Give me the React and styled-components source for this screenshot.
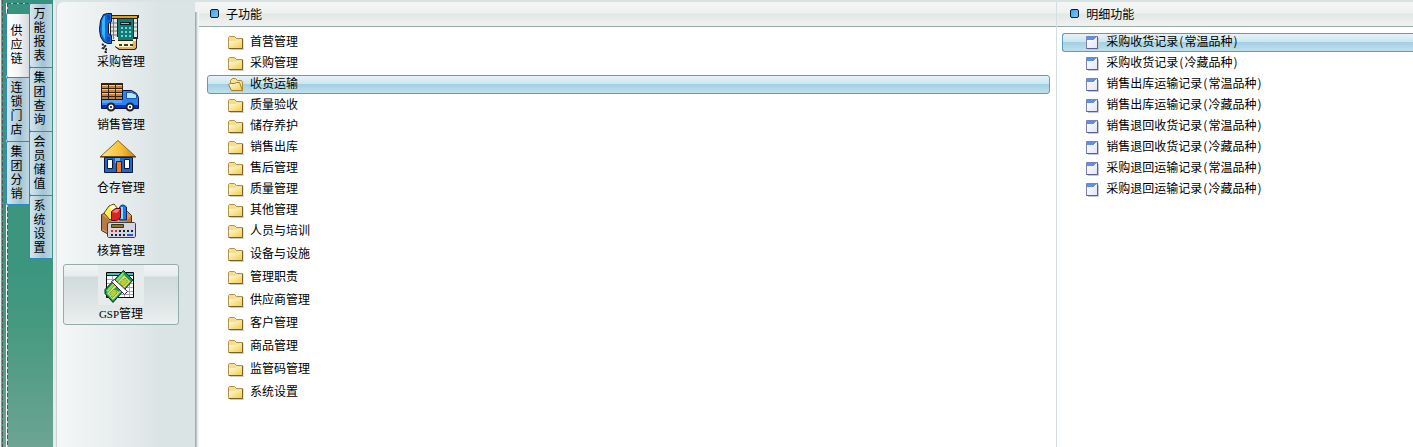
import React, { useState } from "react";
import styled, { createGlobalStyle, css } from "styled-components";

const GlobalStyle = createGlobalStyle`
  * { box-sizing: border-box; }
  body {
    margin: 0;
    background: #fff;
    color: #000;
    font: 12px/16px "Noto Sans CJK SC", sans-serif;
  }
  button { font: inherit; color: inherit; cursor: default; }
`;

const Shell = styled.div`
  display: flex;
  min-height: 100vh;
`;

const Rail = styled.aside`
  display: flex;
  flex: none;
  width: 53px;
  border-left: 1px solid #e9eeee;
  background: linear-gradient(#3a9180, #3c967f 60%, #45997f 72%, #6da493);
`;

const Edge = styled.div`
  width: 5px;
  border-left: 1px solid #8d9694;
  background: repeating-linear-gradient(#55535a 0 4px, #3f9a83 4px 6px) 0 0 / 1px 100% no-repeat;
`;

const Frame = styled.div`
  display: flex;
  flex: 1;
  margin-top: 3px;
  border-left: 1px solid #fff;
  background:
    repeating-linear-gradient(#55535a 0 4px, #b9c9c4 4px 6px) 0 0 / 1px 100% no-repeat,
    repeating-linear-gradient(90deg, #55535a 0 4px, #b9c9c4 4px 6px) 0 0 / 23px 1px no-repeat;
`;

const TabColumn = styled.nav`
  display: flex;
  flex-direction: column;
  width: 23px;
  padding-top: ${(p) => (p.$inner ? 0 : 10)}px;
  &:first-child { margin-left: -1px; }
`;

const Tab = styled.button`
  display: flex;
  align-items: center;
  justify-content: center;
  height: 64px;
  padding: 0 3px 3px 0;
  border: 0;
  border-top: 1px solid #2a8ac2;
  border-left: 1px solid #2a8ac2;
  border-radius: 2px 0 0 2px;
  line-height: 14px;
  background: ${(p) =>
    p.$active
      ? "linear-gradient(90deg, #fff, #f4f5f6 50%, #d5dadd)"
      : "linear-gradient(90deg, #d6e7ee, #bcd6e2 30%, #a5c4d4 60%, #c0d8e3)"};
  &:last-child { border-bottom: 1px solid #2a8ac2; }
`;

const TabText = styled.span`
  width: 12px;
  word-break: break-all;
`;

const Workspace = styled.div`
  display: flex;
  flex: 1;
  min-width: 0;
  border-top: 2px solid #d9e4e2;
  border-left: 3px solid #e6ebeb;
  background: #d9e4e2;
`;

const Nav = styled.nav`
  display: flex;
  flex-direction: column;
  flex: none;
  gap: 2px;
  width: 139px;
  padding: 10px 16px 0 6px;
  border-left: 1px solid #ccd2d6;
  border-top-left-radius: 6px;
  background: linear-gradient(90deg, #f5f7f7, #edf1f2 25%, #e3eaeb 55%, #dbe4e5 75%);
`;

const NavButton = styled.button`
  display: flex;
  flex-direction: column;
  align-items: center;
  height: 61px;
  padding: 0;
  border: 1px solid transparent;
  border-radius: 3px;
  background: none;
  ${(p) =>
    p.$active &&
    css`
      border-color: #94adab;
      background: linear-gradient(#f2f5f5, #e6ecec 11px, #d1dbdb 12px, #dfe6e6 40px, #ebf0f0);
    `}
`;

const NavIcon = styled.svg`
  display: block;
  flex: none;
  width: 46px;
  height: 40px;
`;

const Latin = styled.span`
  font-family: "Liberation Serif", serif;
  font-size: 11px;
`;

const Divider = styled.div`
  flex: none;
  width: 4px;
  margin-top: 10px;
  background: linear-gradient(90deg, #a3afb1 0 1px, #bcc8ca 1px 2px, #e3e8e8 2px 3px, #f5f7f7 3px);
`;

const Gutter = styled.div`
  display: flex;
  flex: none;
  background: linear-gradient(#f1f4f3 0 10px, #fff 10px);
`;

const Panel = styled.section`
  flex: ${(p) => p.$grow};
  min-width: 0;
  background: #fff;
  & + & { border-left: 1px solid #d5dfe1; }
`;

const PanelHeader = styled.header`
  display: flex;
  align-items: center;
  gap: 7px;
  height: 25px;
  padding: 0 10px 1px ${(p) => (p.$detail ? 13 : 11)}px;
  border-bottom: 1px solid #98a8a5;
  background: linear-gradient(#f4f7f6, #edf1f0 45%, #e2e7e6 50%, #eff2f1);
`;

const Marker = styled.span`
  width: 9px;
  height: 9px;
  border: 1px solid #0b1c2c;
  border-radius: 2px;
  background: linear-gradient(135deg, #4aa0e8, #6fc8ff);
`;

const Title = styled.h2`
  margin: 0;
  font-size: 12px;
  font-weight: 400;
`;

const List = styled.div`
  display: flex;
  flex-direction: column;
  gap: ${(p) => (p.$loose ? 4 : 2)}px;
  padding: ${(p) => (p.$loose ? "4px 6px 0 8px" : "6px 6px 0 8px")};
  ${(p) => p.$detail && css`padding: 6px 0 0 5px;`}
`;

const Row = styled.button`
  display: flex;
  align-items: center;
  gap: ${(p) => (p.$detail ? 4 : 6)}px;
  width: 100%;
  height: 19px;
  padding: 0 0 0 ${(p) => (p.$detail ? 23 : 20)}px;
  border: 1px solid transparent;
  border-radius: 3px;
  background: none;
  text-align: left;
  white-space: nowrap;
  ${(p) =>
    p.$detail &&
    css`
      border-right: 0;
      border-radius: 3px 0 0 3px;
    `}
  ${(p) =>
    p.$active &&
    css`
      border-color: #5a9dbd;
      background: linear-gradient(#e6f3f8, #cde6f0 45%, #a3d0e3 50%, #bfe0ed);
    `}
`;

const RowLabel = styled.span`
  padding-bottom: 4px;
`;

const RowIcon = styled.svg`
  display: block;
  flex: none;
  width: 16px;
  height: 15px;
`;

const Paren = styled.span`
  padding: 0 1px;
`;

const PhoneIcon = () => (
  <NavIcon viewBox="0 0 46 40" aria-hidden="true">
    <path d="M12 2h29v3h-1v21h-1v9l-2 2H21l-4-3v-6h-5z" fill="#222" />
    <path d="M13 3h26v2H13z" fill="#d9a21c" />
    <path d="M13 6h6v21h-6zM36 6h3v18h-3z" fill="#e4e4e4" />
    <path d="M13 10h6M13 14h6M13 18h6M13 22h6M36 10h3M36 14h3M36 18h3M15.500 6v20" stroke="#777" />
    <path d="M20 6h15v21H20z" fill="#117c77" />
    <path d="M22 9h11v3H22z" fill="#0a2226" />
    <path d="M23 10h8v1h-8z" fill="#9bb8ae" />
    <path d="M23 14h2v2h-2zM27 14h2v2h-2zM31 14h2v2h-2zM23 18h2v2h-2zM27 18h2v2h-2zM31 18h2v2h-2zM23 22h2v2h-2zM27 22h2v2h-2zM31 22h2v2h-2z" fill="#76d3cb" />
    <path d="M17 24h3v4h15v-2h3v8l-2 2H22l-5-3z" fill="#fff5cc" />
    <path d="M35 28h3v6l-2 2h-2zM20 34h14v2H22z" fill="#e9b35a" />
    <path d="M21 31h3v2h-3zM26 31h4v2h-4zM32 31h3v2h-3z" fill="#4a3a18" />
    <path d="M5.500 1.500l4-1h4v8l-3 2v10l3 2v8h-4l-4-2-3-5-1-7 1-9z" fill="#1268d8" stroke="#06132e" />
    <path d="M6 3L4 8v13l3 6V3z" fill="#35b5ff" />
    <path d="M9 2h3v5H9zM9 24h3v5H9z" fill="#1847a8" />
    <path d="M4 31l3 2-2 2 3 1 0 3-2 0" fill="none" stroke="#222" strokeWidth="2" strokeDasharray="2 1" />
  </NavIcon>
);

const TruckIcon = () => (
  <NavIcon viewBox="0 0 46 40" aria-hidden="true">
    <path d="M3 7h22v17H3z" fill="#35210d" />
    <path d="M4 9h6v3H4zM11 9h6v3h-6zM18 9h6v3h-6zM4 13h6v3H4zM11 13h6v3h-6zM18 13h6v3h-6zM4 17h6v3H4zM11 17h6v3h-6zM18 17h6v3h-6zM4 21h6v2H4zM11 21h6v2h-6zM18 21h6v2h-6z" fill="#c58336" />
    <path d="M4 9h6v1H4zM11 9h6v1h-6zM18 9h6v1h-6zM4 13h6v1H4zM11 13h6v1h-6zM18 13h6v1h-6zM4 17h6v1H4zM11 17h6v1h-6zM18 17h6v1h-6z" fill="#f0c883" />
    <path d="M3.500 23.500h21v-9h9l5 3 2 4v11h-37z" fill="#2a83ee" stroke="#07144a" />
    <path d="M4 24h20v3H4z" fill="#53a5ff" />
    <path d="M4 29h36v3H4z" fill="#0b2bd0" />
    <path d="M28.500 16.500h5l5 2v4h-10z" fill="#b8e8ff" stroke="#1c5bac" />
    <circle cx="13" cy="31" r="3.500" fill="#fff" stroke="#222" strokeWidth="2" />
    <circle cx="32" cy="31" r="3.500" fill="#fff" stroke="#222" strokeWidth="2" />
    <circle cx="13" cy="31" r="1" />
    <circle cx="32" cy="31" r="1" />
  </NavIcon>
);

const HouseIcon = () => (
  <NavIcon viewBox="0 0 46 40" aria-hidden="true">
    <defs>
      <linearGradient id="roof">
        <stop offset="0" stopColor="#ffe88a" />
        <stop offset=".6" stopColor="#f6bd35" />
        <stop offset="1" stopColor="#c98210" />
      </linearGradient>
    </defs>
    <path d="M6.500 18.500h28v15h-28z" fill="#1d66cf" stroke="#08143c" />
    <path d="M17 19h5v5h-5z" fill="#5db2ff" />
    <path d="M20 1.500L2.500 17.500h35z" fill="url(#roof)" stroke="#8a661c" />
    <path d="M2 18h36" stroke="#3a2a10" />
    <path d="M9.500 20.500h5v9h-5zM26.500 20.500h5v9h-5z" fill="#fff" stroke="#0a1433" />
    <path d="M18.500 22.500h5v11h-5z" fill="#e88022" stroke="#3b1c06" />
  </NavIcon>
);

const BoxIcon = () => (
  <NavIcon viewBox="0 0 46 40" aria-hidden="true">
    <path d="M3.500 12.500l8-3h18l4 4v17l-21 3-9-5z" fill="#dd9a5a" stroke="#4a3018" />
    <path d="M4 13l9 6v12l-9-4z" fill="#b87a44" />
    <path d="M6 11l5-7 5-2 4 5-5 9-3 2z" fill="#ffec58" stroke="#55480a" />
    <path d="M12 4l4-1 3 4-5 2z" fill="#fffbd0" />
    <path d="M21.500 5q3-4 7 0v13h-7z" fill="#1b7be6" stroke="#072260" />
    <path d="M23 5h2v12h-2z" fill="#8fd8ff" />
    <path d="M13.500 9.500l4-3h5v9l-4 3h-5z" fill="#d8232b" stroke="#5b0508" />
    <path d="M14 10l4-3h4l-3 4z" fill="#ff7a74" />
    <path d="M28 19l5-5v6h-5z" fill="#d0701c" />
    <path d="M11.500 20.500h25l1 1v13l-1 1h-26l-1-1v-13z" fill="#d3d5e2" stroke="#3c3d48" />
    <path d="M13.500 22.500h12v3h-12z" fill="#8a7a2b" stroke="#3a350c" />
    <path d="M13 28h2v2h-2zM17 28h2v2h-2z" fill="#e22" />
    <path d="M13 32h2v2h-2zM17 32h2v2h-2zM21 28h2v2h-2zM21 32h2v2h-2zM25 28h2v2h-2zM25 32h2v2h-2zM29 28h2v2h-2zM33 28h2v2h-2z" fill="#222" />
    <path d="M29 32h6v2h-6z" fill="#2555ef" />
  </NavIcon>
);

const MoneyIcon = () => (
  <NavIcon viewBox="0 0 46 40" aria-hidden="true">
    <path d="M0 0h46v40H0z" fill="#e6ebeb" />
    <path d="M8.500 7.500h27v25h-27z" fill="#fff" stroke="#000" />
    <path d="M9 8h26v2H9z" fill="#30c7c8" />
    <path d="M9 10.500h26" stroke="#000" />
    <path d="M9 14.500h26M9 18.500h26M9 22.500h26M9 26.500h26M9 29.500h26M14.500 11v21M20.500 11v21M26.500 11v21M31.500 11v21" stroke="#a8a8a8" />
    <path d="M25.500 5.500l9.500 9.500L15 37.500 7 28.500v-4z" fill="#16905c" stroke="#06301f" />
    <path d="M25.500 8L9 26.500" stroke="#9be04a" strokeWidth="2" />
    <path d="M26 10l6.500 6.500L15 35l-6-6.500z" fill="#e5e04a" stroke="#35c4c5" />
    <path d="M26.500 13l3.500 3.500-5 5-3.500-3.500zM16 24l3.500 3.500-5 5-3-4z" fill="#b8cf3a" stroke="#5f9a2a" strokeDasharray="2 1" />
    <path d="M19 21l4 3-2 3-5-3z" fill="#14a05c" />
    <path d="M13.500 16.500l3-2 13 12-3 3z" fill="#fff" stroke="#3a2050" />
  </NavIcon>
);

const FolderIcon = ({ open }) => (
  <RowIcon viewBox="0 0 16 15" aria-hidden="true">
    <defs>
      <linearGradient id="folder" x2="1" y2="1">
        <stop offset="0" stopColor="#fffbe0" />
        <stop offset="1" stopColor="#f3cd4c" />
      </linearGradient>
    </defs>
    <path d="M2 14.500h14V4" fill="none" stroke="#c9cbd0" />
    {open ? (
      <>
        <path d="M2.500 10V3.500l2-2h3l2 2h4l1 2v8z" fill="#f7e29a" stroke="#b08a35" />
        <path d="M.5 7.500l2-1h4l2-1h3l3 8h-11z" fill="url(#folder)" stroke="#a47d2c" />
      </>
    ) : (
      <>
        <path d="M.5 12.500v-10l1-1h5l2 2h6v10h-14z" fill="#f6df8c" stroke="#b1924a" />
        <path d="M1 6h6l2-1h5v8H1z" fill="url(#folder)" />
        <path d="M14.500 4v9.500H1" fill="none" stroke="#7b6026" />
      </>
    )}
  </RowIcon>
);

const FormIcon = () => (
  <RowIcon viewBox="0 0 16 15" aria-hidden="true">
    <defs>
      <linearGradient id="sheet" x2="1" y2="1">
        <stop offset="0" stopColor="#fff" />
        <stop offset="1" stopColor="#dfe5f5" />
      </linearGradient>
    </defs>
    <path d="M2 14.500h10.500V3" fill="none" stroke="#c6c8d6" />
    <path d="M.5 1.500h11v12H.5z" fill="url(#sheet)" stroke="#7d84b4" />
    <path d="M1 2h10L8 5H1z" fill="#5b90f0" />
    <path d="M11.500 1.500v12H.5" fill="none" stroke="#5b5d95" />
    <path d="M7.500 5.500l3-3" stroke="#fff" />
  </RowIcon>
);

const outerTabs = ["供应链", "连锁门店", "集团分销"];
const innerTabs = ["万能报表", "集团查询", "会员储值", "系统设置"];

const modules = [
  { label: "采购管理", Icon: PhoneIcon },
  { label: "销售管理", Icon: TruckIcon },
  { label: "仓存管理", Icon: HouseIcon },
  { label: "核算管理", Icon: BoxIcon },
  { latin: "GSP", label: "管理", Icon: MoneyIcon },
];

const functionGroups = [
  ["首营管理", "采购管理", "收货运输", "质量验收", "储存养护", "销售出库", "售后管理", "质量管理", "其他管理", "人员与培训"],
  ["设备与设施", "管理职责", "供应商管理", "客户管理", "商品管理", "监管码管理", "系统设置"],
];

const records = [
  ["采购收货记录", "常温品种"],
  ["采购收货记录", "冷藏品种"],
  ["销售出库运输记录", "常温品种"],
  ["销售出库运输记录", "冷藏品种"],
  ["销售退回收货记录", "常温品种"],
  ["销售退回收货记录", "冷藏品种"],
  ["采购退回运输记录", "常温品种"],
  ["采购退回运输记录", "冷藏品种"],
];

export default function App() {
  const [tab, setTab] = useState("供应链");
  const [module, setModule] = useState(4);
  const [func, setFunc] = useState("收货运输");
  const [record, setRecord] = useState(0);

  const renderTab = (name) => (
    <Tab key={name} type="button" $active={tab === name} onClick={() => setTab(name)}>
      <TabText>{name}</TabText>
    </Tab>
  );

  return (
    <>
      <GlobalStyle />
      <Shell>
        <Rail>
          <Edge />
          <Frame>
            <TabColumn>{outerTabs.map(renderTab)}</TabColumn>
            <TabColumn $inner>{innerTabs.map(renderTab)}</TabColumn>
          </Frame>
        </Rail>
        <Workspace>
          <Nav>
            {modules.map(({ latin, label, Icon }, i) => (
              <NavButton key={i} type="button" $active={module === i} onClick={() => setModule(i)}>
                <Icon />
                <span>
                  {latin && <Latin>{latin}</Latin>}
                  {label}
                </span>
              </NavButton>
            ))}
          </Nav>
          <Gutter>
            <Divider />
          </Gutter>
          <Panel $grow={858}>
            <PanelHeader>
              <Marker />
              <Title>子功能</Title>
            </PanelHeader>
            {functionGroups.map((group, g) => (
              <List key={g} $loose={g > 0}>
                {group.map((name) => (
                  <Row key={name} type="button" $active={func === name} onClick={() => setFunc(name)}>
                    <FolderIcon open={func === name} />
                    <RowLabel>{name}</RowLabel>
                  </Row>
                ))}
              </List>
            ))}
          </Panel>
          <Panel $grow={356}>
            <PanelHeader $detail>
              <Marker />
              <Title>明细功能</Title>
            </PanelHeader>
            <List $detail>
              {records.map(([name, kind], i) => (
                <Row key={i} type="button" $detail $active={record === i} onClick={() => setRecord(i)}>
                  <FormIcon />
                  <RowLabel>
                    {name}
                    <Paren>(</Paren>
                    {kind}
                    <Paren>)</Paren>
                  </RowLabel>
                </Row>
              ))}
            </List>
          </Panel>
        </Workspace>
      </Shell>
    </>
  );
}
